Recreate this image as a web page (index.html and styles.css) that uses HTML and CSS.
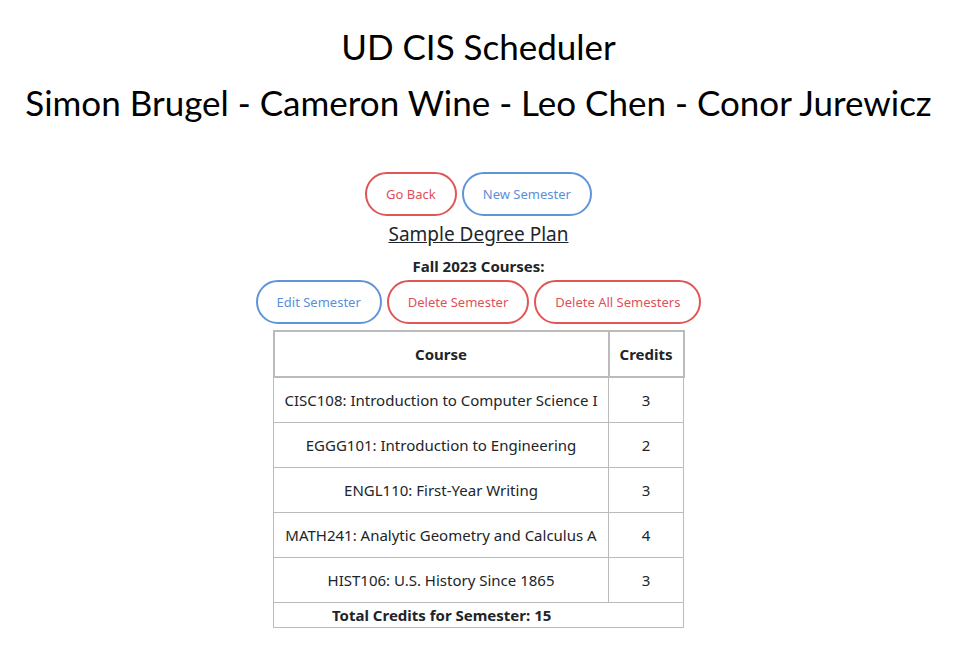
FILE: index.html
```html
<!DOCTYPE html>
<html>
<head>
<meta charset="utf-8">
<link rel="stylesheet" href="styles.css">
</head>
<body>
<header class="app-header">
  <h1 class="title">UD CIS Scheduler</h1>
  <h2 class="authors">Simon Brugel - Cameron Wine - Leo Chen - Conor Jurewicz</h2>
</header>
<main class="content">
  <div class="btn-row top-row">
    <button class="pill red">Go Back</button>
    <button class="pill blue">New Semester</button>
  </div>
  <div class="plan-name">Sample Degree Plan</div>
  <div class="semester-title">Fall 2023 Courses:</div>
  <div class="btn-row sem-row">
    <button class="pill blue">Edit Semester</button>
    <button class="pill red">Delete Semester</button>
    <button class="pill red">Delete All Semesters</button>
  </div>
  <table class="courses">
    <thead>
      <tr><th class="col-course">Course</th><th class="col-credits">Credits</th></tr>
    </thead>
    <tbody>
      <tr><td>CISC108: Introduction to Computer Science I</td><td>3</td></tr>
      <tr><td>EGGG101: Introduction to Engineering</td><td>2</td></tr>
      <tr><td>ENGL110: First-Year Writing</td><td>3</td></tr>
      <tr><td>MATH241: Analytic Geometry and Calculus A</td><td>4</td></tr>
      <tr><td>HIST106: U.S. History Since 1865</td><td>3</td></tr>
    </tbody>
    <tfoot>
      <tr><td colspan="2" class="total">Total Credits for Semester: 15</td></tr>
    </tfoot>
  </table>
</main>
</body>
</html>
```
FILE: styles.css
```css
html, body {
  margin: 0;
  padding: 0;
  background: #fff;
}
body {
  font-family: "Noto Sans", "Open Sans", sans-serif;
  color: #212529;
  padding-right: 22px;
}
.app-header {
  text-align: center;
  padding-top: 24px;
}
.title, .authors {
  font-family: "Lato", sans-serif;
  font-weight: 400;
  color: #000;
  margin: 0;
}
.title {
  font-size: 35px;
  line-height: 44px;
}
.authors {
  font-size: 35px;
  line-height: 56px;
  margin-top: 6px;
}
.content {
  display: flex;
  flex-direction: column;
  align-items: center;
  margin-top: 42px;
}
.btn-row {
  display: flex;
  gap: 5px;
  justify-content: center;
}
.pill {
  font-family: "Noto Sans", sans-serif;
  font-size: 13px;
  height: 44px;
  padding: 0 19px;
  background: #fff;
  border: 2px solid;
  border-radius: 22px;
  cursor: pointer;
}
.pill.red {
  color: #e0505a;
  border-color: #e05555;
}
.pill.blue {
  color: #5a90d8;
  border-color: #5f95d8;
}
.plan-name {
  font-size: 19px;
  text-decoration: underline;
  line-height: 26px;
  margin-top: 5px;
}
.semester-title {
  font-size: 15px;
  font-weight: 700;
  line-height: 20px;
  margin-top: 9px;
}
.sem-row {
  margin-top: 4px;
}
.courses {
  margin-top: 6px;
  width: 412px;
  border-collapse: collapse;
  border: 1px solid #bbb;
  font-size: 15px;
  text-align: center;
}
.courses th {
  border: 2px solid #bbb;
  height: 42px;
  font-weight: 700;
  font-size: 15px;
}
.courses td {
  border: 1px solid #bbb;
  height: 44px;
  padding: 0 8px;
}
.col-credits {
  width: 75px;
  box-sizing: border-box;
}
.courses td.total {
  height: 24px;
  font-weight: 700;
  padding: 0;
  text-align: left;
  padding-left: 58px;
}
```
